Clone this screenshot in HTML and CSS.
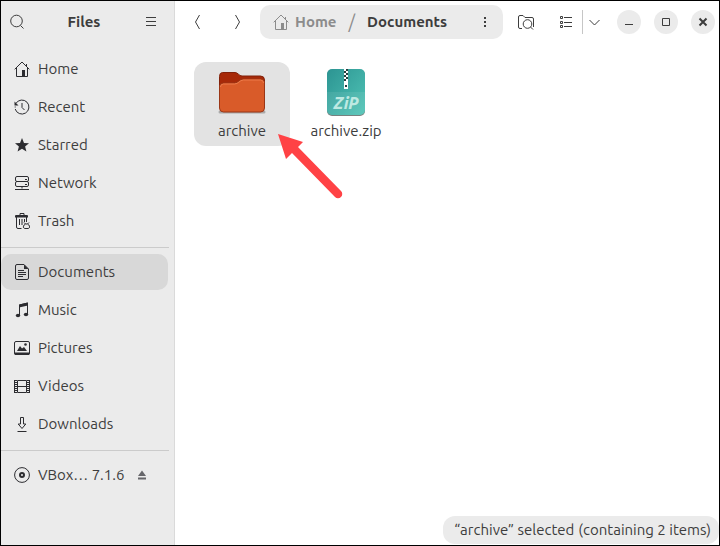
FILE: index.html
```html
<!DOCTYPE html>
<html lang="en">
<head>
<meta charset="utf-8">
<title>Files</title>
<meta name="viewport" content="width=device-width, initial-scale=1">
<link rel="stylesheet" href="styles.css">
</head>
<body>
<svg class="defs" aria-hidden="true">
  <symbol id="home" viewBox="0 0 16 16"><path d="M.7 8.300 8 1l7.300 7.300M2.500 7v8.500h11V7M12.500 5V3" /><path class="solid" d="M8 9h3v6.500H8z"/></symbol>
</svg>
<div class="window">
  <aside class="sidebar">
    <header class="side-head">
      <button class="icon-btn" aria-label="Search"><svg viewBox="0 0 16 16"><circle cx="7.500" cy="7" r="5.800"/><path d="m11.500 11.500 3 3"/></svg></button>
      <h1>Files</h1>
      <button class="icon-btn" aria-label="Main menu"><svg viewBox="0 0 16 16"><path d="M3 3.500h10M3 7.500h10M3 11.500h10"/></svg></button>
    </header>
    <nav class="places" aria-label="Places">
      <a href="#home"><svg><use href="#home"/></svg>Home</a>
      <a href="#recent"><svg viewBox="0 0 16 16"><path d="M2 4.300A7 7 0 1 1 1.200 10M8 4v4.500l2.500 2.500"/><path d="M1.200 7.500v1" /><path class="solid" d="M.5 2.500v4h4z"/></svg>Recent</a>
      <a href="#starred"><svg viewBox="0 0 16 16"><path class="solid" d="m8 1 2 4.900 5 .3-3.900 3.300 1.300 5.100L8 11.800l-4.400 2.800 1.300-5.100L1 6.200l5-.3z"/></svg>Starred</a>
      <a href="#network"><svg viewBox="0 0 16 16"><rect x="1.500" y="1.500" width="13" height="5" rx="1.500"/><rect x="1.500" y="6.500" width="13" height="5" rx="1.500"/><path d="M1 14.500h14M8 11.500v2M11 4.500h2M11 9.500h2"/></svg>Network</a>
      <a href="#trash"><svg viewBox="0 0 16 16"><path d="M6 2V.5h4V2M2.500 4v10q0 1.500 1.500 1.500h3.500M12.500 4v5M5.500 6v6M8 6v6M10.500 6v3"/><path class="solid" d="M1 4.500V3q0-1 1-1h11q1 0 1 1v1.500z"/><path d="m10 9.500 1.500 1.500h2L15 9.500M11.500 11c-3 1.500-2.500 4.500-.5 4.500h3c2 0 2.500-3-.5-4.500"/></svg>Trash</a>
    </nav>
    <hr>
    <nav class="places" aria-label="Bookmarks">
      <a href="#documents" class="active" aria-current="page"><svg viewBox="0 0 16 16"><path d="M10 .5H3Q1.500.5 1.500 2v12Q1.500 15.500 3 15.500h10q1.500 0 1.500-1.500V5zM4 6.500h6M4 8.500h8M4 10.500h8M4 12.500h5"/><path class="solid" d="M10 .5V5h4.500z"/></svg>Documents</a>
      <a href="#music"><svg viewBox="0 0 16 16"><path d="M5.500 13V3l8-2v11"/><path class="solid" d="M5 2.500 14 .500v3L5 5.500z"/><ellipse class="solid" cx="4" cy="13.500" rx="2.200" ry="1.800"/><ellipse class="solid" cx="12" cy="12.500" rx="2.200" ry="1.800"/></svg>Music</a>
      <a href="#pictures"><svg viewBox="0 0 16 16"><rect x=".5" y="1.500" width="15" height="13" rx="1.500"/><path class="solid" d="M.5 12.500h15V14q0 1-1 1h-13q-1 0-1-1zM3 11l3-5 2 2.500L10 7l3 4z"/><circle class="solid" cx="11.500" cy="4.500" r="1.300"/></svg>Pictures</a>
      <a href="#videos"><svg viewBox="0 0 16 16"><path d="M3.500 2.500h9v12h-9zM3.500 8.500h9"/><path class="film" d="M1.500 2v13M14.500 2v13"/><path d="M.5 2v13M15.500 2v13"/></svg>Videos</a>
      <a href="#downloads"><svg viewBox="0 0 16 16"><path d="M6.500 1.500h3V8h2.300L8 12.500 4.200 8h2.300zM3.500 15.500h9"/></svg>Downloads</a>
    </nav>
    <hr>
    <div class="places">
      <div class="volume">
        <a href="#vbox"><svg viewBox="0 0 16 16"><circle cx="8" cy="8" r="7.400"/><circle class="hub" cx="8" cy="8" r="2"/></svg>VBox… 7.1.6</a>
        <button class="eject" aria-label="Eject"><svg viewBox="0 0 16 16"><path class="solid" d="m8 3.500 4 5.500H4zM4 10.500h8v2H4z"/></svg></button>
      </div>
    </div>
  </aside>
  <main class="content">
    <header class="toolbar">
      <div class="group">
        <button class="icon-btn" aria-label="Back"><svg viewBox="0 0 16 16"><path d="M10.500 1 6.500 8l4 7"/></svg></button>
        <button class="icon-btn" aria-label="Forward"><svg viewBox="0 0 16 16"><path d="m6.500 1 4 7-4 7"/></svg></button>
      </div>
      <div class="pathbar">
        <a href="#home" class="crumb"><svg><use href="#home"/></svg>Home</a>
        <span class="slash">/</span>
        <a href="#documents" class="crumb current">Documents</a>
        <button class="icon-btn more" aria-label="Folder menu"><svg viewBox="0 0 16 16"><path class="solid" d="M7 3h2v2H7zM7 7h2v2H7zM7 11h2v2H7z"/></svg></button>
      </div>
      <div class="group">
        <button class="icon-btn" aria-label="Search folder"><svg viewBox="0 0 16 16"><path d="M4 14.500H2Q.5 14.500.5 13V3Q.5 1.500 2 1.500h3l2 2h7q1.500 0 1.500 1.500v8"/><circle cx="9.500" cy="10" r="4.300"/><path d="m12.500 13 2.500 2.500"/></svg></button>
        <div class="view">
          <button class="icon-btn" aria-label="List view"><svg viewBox="0 0 16 16"><path d="M2.500 2.500h2v2h-2zM2.500 7.500h2v2h-2zM2.500 11.500h2v2h-2zM6 3.500h8M6 8.500h8M6 12.500h8"/></svg></button>
          <button class="icon-btn split" aria-label="View options"><svg viewBox="0 0 16 16"><path d="m2.500 6 5 5 5-5"/></svg></button>
        </div>
      </div>
      <div class="window-controls">
        <button aria-label="Minimize"><svg viewBox="0 0 16 16"><path d="M4 10.500h8"/></svg></button>
        <button aria-label="Maximize"><svg viewBox="0 0 16 16"><path d="M4.500 4.500h7v7h-7z"/></svg></button>
        <button aria-label="Close"><svg viewBox="0 0 16 16"><path class="cross" d="m4.500 4.500 7 7M11.500 4.500l-7 7"/></svg></button>
      </div>
    </header>
    <div class="files">
      <a href="#archive" class="file selected">
        <svg viewBox="0 0 48 48">
          <path d="M2 44h44" stroke="#aaa" stroke-width="3" stroke-linecap="round"/>
          <path d="M4.500 4.500q-3 0-3 4v31h45V12q0-4-4-4H24c-3 0-4-3.500-7-3.500z" fill="#a72908" stroke="#81220b"/>
          <path d="M1.500 19q0-4 4-4h11c4 0 5-4 9-4h17q4 0 4 4v25q0 4-4 4h-37q-4 0-4-4z" fill="#d95b29" stroke="#9a3616"/>
          <path d="M2.500 19q0-3 3-3h11c4 0 5-4 9-4h17q3 0 3 3" fill="none" stroke="#ee7b4a"/>
        </svg>
        <span>archive</span>
        <svg class="pointer" viewBox="0 0 66 66" aria-hidden="true"><path d="m1 1 25 8-5 5 43 44a4 4 0 0 1-6 6L15 20l-6 6z" fill="#ff4245"/></svg>
      </a>
      <a href="#zip" class="file">
        <svg viewBox="0 0 48 48">
          <defs><linearGradient id="teal" x1="0" y1="0" x2="1" y2="1"><stop stop-color="#2c9492"/><stop offset="1" stop-color="#50c4b6"/></linearGradient></defs>
          <rect x="5" y="2" width="38" height="46" rx="5" fill="#78817f"/>
          <rect x="5" y="1" width="38" height="46" rx="5" fill="url(#teal)"/>
          <path d="M5 24h38v18q0 5-5 5H10q-5 0-5-5z" fill="#fff" fill-opacity=".08"/>
          <path d="M22 1h4v13h-4z" fill="#263e3d"/>
          <path d="M22 1h2v2h-2zM24 3h2v2h-2zM22 5h2v2h-2zM24 7h2v2h-2zM22 9h2v2h-2zM24 11h2v2h-2zM22 13h4v8h-4z" fill="#fff"/>
          <path d="M23 17h2v2h-2z" fill="#263e3d"/>
          <text x="24" y="41" text-anchor="middle" class="zip">ZiP</text>
        </svg>
        <span>archive.zip</span>
      </a>
    </div>
    <footer class="status" role="status"><span>“archive” selected</span><span>(containing 2 items)</span></footer>
  </main>
</div>
</body>
</html>
```
FILE: styles.css
```css
* { box-sizing: border-box; }
body {
  margin: 0;
  font: 15px/20px Ubuntu, "Noto Sans", sans-serif;
  color: #3d3d3d;
  background: #fff;
}
a { color: inherit; text-decoration: none; }
button {
  display: flex;
  align-items: center;
  justify-content: center;
  padding: 0;
  border: 0;
  background: none;
  color: inherit;
}
svg {
  flex: none;
  width: 16px;
  height: 16px;
  fill: none;
  stroke: currentColor;
}
.defs { position: absolute; width: 0; height: 0; }
.solid { fill: currentColor; stroke: none; }
.film { stroke-width: 3; stroke-dasharray: 1 1; }
.hub { stroke-width: 2; }
.cross { stroke-width: 2; }

.window {
  display: grid;
  grid-template-columns: 174px 1fr;
  min-height: 100vh;
  border: 1px solid #000;
}
.sidebar {
  background: #ebebeb;
  border-right: 1px solid #dadada;
}
.side-head {
  display: flex;
  align-items: center;
  justify-content: space-between;
  height: 42px;
  margin-bottom: 8px;
  padding: 0 11px 0 4px;
}
h1 { margin: 0; font-size: 15px; }
.icon-btn { width: 24px; height: 24px; }
.places {
  display: flex;
  flex-direction: column;
  gap: 2px;
  margin-right: 6px;
}
.places a {
  display: flex;
  align-items: center;
  gap: 8px;
  height: 36px;
  padding-left: 13px;
  border-radius: 10px;
}
.places svg { color: #2c2c30; }
.active { background: #d8d8d8; }
hr {
  height: 1px;
  margin: 8px 5px 6px 0;
  border: 0;
  background: #cbcbcb;
}
.volume { display: flex; align-items: center; gap: 10px; }
.eject svg { color: #66666a; }

.content { display: flex; flex-direction: column; min-width: 0; }
.toolbar {
  display: flex;
  align-items: center;
  gap: 11px;
  height: 42px;
  padding: 0 4px 0 10px;
}
.group { display: flex; gap: 16px; }
.pathbar {
  display: flex;
  flex: 1;
  align-items: center;
  height: 34px;
  padding: 0 6px 0 13px;
  border-radius: 10px;
  background: #ebebeb;
  font-weight: bold;
}
.crumb { display: flex; align-items: center; gap: 6px; color: #8c8c8c; }
.crumb.current { color: #3d3d3d; }
.slash { margin: 0 12px; color: #8c8c8c; font-size: 18px; font-weight: normal; }
.more { margin-left: auto; }
.view { display: flex; align-items: center; }
.split { margin-left: 4px; border-left: 1px solid #c6c6c6; }
.window-controls { display: flex; gap: 13px; }
.window-controls button {
  width: 24px;
  height: 24px;
  border-radius: 50%;
  background: #ebebeb;
}

.files { display: flex; flex-wrap: wrap; gap: 8px; padding: 19px; }
.file {
  position: relative;
  display: flex;
  flex-direction: column;
  align-items: center;
  gap: 5px;
  width: 96px;
  height: 84px;
  padding-top: 6px;
  border-radius: 12px;
}
.file svg { width: 48px; height: 48px; stroke: none; }
.selected { background: #e3e3e3; }
.zip { fill: #bde9e2; font: italic 900 16px Ubuntu, "Noto Sans", sans-serif; }
.file .pointer {
  position: absolute;
  z-index: 1;
  top: 71px;
  left: 83px;
  width: 66px;
  height: 66px;
}
.status {
  display: flex;
  gap: 4px;
  margin: auto 0 1px auto;
  padding: 4px 8px 4px 11px;
  border-radius: 12px;
  background: #ebebeb;
}
```
